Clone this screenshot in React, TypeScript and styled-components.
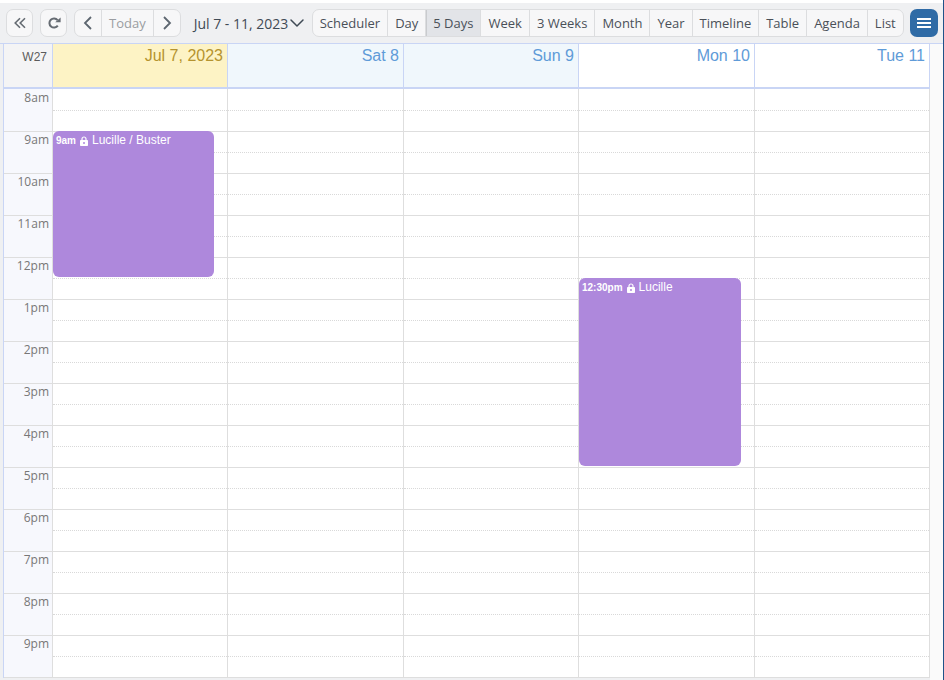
import React from 'react'
import styled, { createGlobalStyle } from 'styled-components'
import { ChevronDown } from 'lucide-react'

const hours = ['8am', '9am', '10am', '11am', '12pm', '1pm', '2pm', '3pm', '4pm', '5pm', '6pm', '7pm', '8pm', '9pm']
const views = ['Scheduler', 'Day', '5 Days', 'Week', '3 Weeks', 'Month', 'Year', 'Timeline', 'Table', 'Agenda', 'List']

type Tone = 'today' | 'weekend' | 'plain'

const days: { label: string; tone: Tone; width: number; event?: { time: string; title: string; top: number; height: number } }[] = [
  { label: 'Jul 7, 2023', tone: 'today', width: 175, event: { time: '9am', title: 'Lucille / Buster', top: 42, height: 146 } },
  { label: 'Sat 8', tone: 'weekend', width: 176 },
  { label: 'Sun 9', tone: 'weekend', width: 175 },
  { label: 'Mon 10', tone: 'plain', width: 176, event: { time: '12:30pm', title: 'Lucille', top: 189, height: 188 } },
  { label: 'Tue 11', tone: 'plain', width: 175 },
]

const DoubleLeft = () => (
  <svg width="14" height="14" viewBox="0 0 14 14" fill="none" stroke="currentColor" strokeWidth="1.6">
    <path d="M7 2.2 L2.2 7 L7 11.8" />
    <path d="M12 2.2 L7.2 7 L12 11.8" />
  </svg>
)

const Chevron = ({ flip }: { flip?: boolean }) => (
  <svg width="10" height="14" viewBox="0 0 10 14" fill="none" stroke="currentColor" strokeWidth="1.8">
    <path d={flip ? 'M2 1 L8 7 L2 13' : 'M8 1 L2 7 L8 13'} />
  </svg>
)

const Refresh = () => (
  <svg width="14" height="14" viewBox="0 0 14 14">
    <path d="M10.8 9.6 A4.6 4.6 0 1 1 10.6 4.1" fill="none" stroke="currentColor" strokeWidth="2" />
    <path d="M8.2 6.2 L13.6 6.2 L13.6 1.4 Z" fill="currentColor" />
  </svg>
)

const Hamburger = () => (
  <svg width="14" height="12" viewBox="0 0 14 12" fill="currentColor">
    <rect x="0" y="1" width="14" height="2" />
    <rect x="0" y="5" width="14" height="2" />
    <rect x="0" y="9" width="14" height="2" />
  </svg>
)

const Lock = () => (
  <svg width="8" height="10" viewBox="0 0 8 10">
    <path d="M2 4.5 V3 A2 2 0 0 1 6 3 V4.5" fill="none" stroke="#fff" strokeWidth="1.2" />
    <rect x="0" y="4" width="8" height="6" rx="0.8" fill="#fff" />
    <circle cx="4" cy="7" r="1" fill="#ae88dc" />
  </svg>
)

const App = () => {
  return (
    <Page>
      <GlobalStyle />
      <Toolbar>
        <IconButton><DoubleLeft /></IconButton>
        <IconButton $gap={7}><Refresh /></IconButton>
        <Group $gap={7}>
          <GroupIcon $wide><Chevron /></GroupIcon>
          <GroupButton $muted>Today</GroupButton>
          <GroupIcon><Chevron flip /></GroupIcon>
        </Group>
        <DateRange>
          Jul 7 - 11, 2023
          <ChevronDown size={24} strokeWidth={1.5} />
        </DateRange>
        <Group>
          {views.map((v) => (
            <GroupButton key={v} $active={v === '5 Days'}>{v}</GroupButton>
          ))}
        </Group>
        <MenuButton><Hamburger /></MenuButton>
      </Toolbar>
      <Calendar>
        <HeaderRow>
          <WeekCell>W27</WeekCell>
          {days.map((d) => (
            <DayHead key={d.label} $tone={d.tone} $width={d.width}>{d.label}</DayHead>
          ))}
        </HeaderRow>
        <Body>
          <TimeColumn>
            {hours.map((h) => (
              <TimeCell key={h}>{h}</TimeCell>
            ))}
          </TimeColumn>
          {days.map((d) => (
            <DayColumn key={d.label} $width={d.width}>
              {hours.map((h) => (
                <HourCell key={h}><HalfLine /></HourCell>
              ))}
              {d.event && (
                <EventCard $top={d.event.top} $height={d.event.height}>
                  <EventTime>{d.event.time}</EventTime>
                  <Lock />
                  <EventTitle>{d.event.title}</EventTitle>
                </EventCard>
              )}
            </DayColumn>
          ))}
        </Body>
      </Calendar>
    </Page>
  )
}

const GlobalStyle = createGlobalStyle`
  html, body {
    margin: 0;
    padding: 0;
    background: #fff;
  }
`

const Page = styled.div`
  width: 944px;
  height: 680px;
  box-sizing: border-box;
  padding-top: 3px;
  overflow: hidden;
  display: flex;
  flex-direction: column;
  border-right: 1px solid #1f5389;
  font-family: "Open Sans", sans-serif;
`

const Toolbar = styled.div`
  height: 40px;
  box-sizing: border-box;
  flex-shrink: 0;
  padding: 6px 0 0 6px;
  display: flex;
  align-items: flex-start;
  background: #eff0f2;
`

const IconButton = styled.button<{ $gap?: number }>`
  width: 27px;
  height: 28px;
  margin-left: ${(p) => p.$gap ?? 0}px;
  padding: 0;
  display: flex;
  align-items: center;
  justify-content: center;
  color: #666c73;
  background: #f7f7f8;
  border: 1px solid #dcdddf;
  border-radius: 7px;
`

const Group = styled.div<{ $gap?: number }>`
  height: 28px;
  margin-left: ${(p) => p.$gap ?? 0}px;
  box-sizing: border-box;
  display: flex;
  background: #f7f7f8;
  border: 1px solid #dcdddf;
  border-radius: 7px;
  overflow: hidden;
`

const GroupButton = styled.button<{ $active?: boolean; $muted?: boolean }>`
  height: 100%;
  padding: 0 7px;
  font-family: "Open Sans", sans-serif;
  font-size: 13px;
  color: ${(p) => (p.$muted ? '#9a9da1' : '#4a5058')};
  background: ${(p) => (p.$active ? '#e2e4e8' : 'transparent')};
  border: none;
  border-right: 1px solid #dcdddf;
  box-shadow: ${(p) => (p.$active ? 'inset 1px 0 0 #c9cbce' : 'none')};

  &:last-child {
    border-right: none;
  }
`

const GroupIcon = styled(GroupButton)<{ $wide?: boolean }>`
  width: ${(p) => (p.$wide ? 27 : 26)}px;
  padding: 0;
  display: flex;
  align-items: center;
  justify-content: center;
  color: #5d6670;
`

const DateRange = styled.div`
  width: 131px;
  height: 28px;
  box-sizing: border-box;
  padding-left: 13px;
  display: flex;
  align-items: center;
  font-size: 14px;
  color: #3f4a55;
  white-space: nowrap;

  svg {
    flex-shrink: 0;
    margin-left: -3px;
  }
`

const MenuButton = styled.button`
  width: 28px;
  height: 28px;
  margin-left: 6px;
  padding: 0;
  display: flex;
  align-items: center;
  justify-content: center;
  color: #fff;
  background: #2f6ba6;
  border: none;
  border-radius: 7px;
`

const Calendar = styled.div`
  flex: 1;
  display: flex;
  flex-direction: column;
  padding-left: 3px;
  background: linear-gradient(to right, #eff0f2 930px, #fafafa 930px);
`

const HeaderRow = styled.div`
  height: 46px;
  box-sizing: border-box;
  margin-left: -3px;
  padding-left: 3px;
  display: flex;
  border-top: 1px solid #c9d5f5;
`

const WeekCell = styled.div`
  width: 50px;
  box-sizing: border-box;
  padding: 6px 5px 0 0;
  text-align: right;
  font-family: "Liberation Sans", sans-serif;
  font-size: 12px;
  color: #5b5b5b;
  background: #f4f4f5;
  border-left: 1px solid #c9d5f5;
  border-right: 1px solid #c9d5f5;
  border-bottom: 2px solid #c9d5f5;
`

const DayHead = styled.div<{ $tone: Tone; $width: number }>`
  width: ${(p) => p.$width}px;
  box-sizing: border-box;
  padding: 3px 4px 0 0;
  text-align: right;
  font-family: "Liberation Sans", sans-serif;
  font-size: 16px;
  color: ${(p) => (p.$tone === 'today' ? '#b5932f' : '#5f9bd8')};
  background: ${(p) => (p.$tone === 'today' ? '#fdf3c5' : p.$tone === 'weekend' ? '#f0f7fc' : '#fff')};
  border-right: 1px solid #c9d5f5;
  border-bottom: 2px solid #c9d5f5;
`

const Body = styled.div`
  display: flex;
`

const TimeColumn = styled.div`
  width: 50px;
  box-sizing: border-box;
  background: #f7f8fd;
  border-left: 1px solid #c9d5f5;
  border-right: 1px solid #dedede;
`

const TimeCell = styled.div`
  height: 42px;
  box-sizing: border-box;
  padding: 0 3px 0 0;
  text-align: right;
  font-size: 12px;
  line-height: 15px;
  color: #777;
  border-bottom: 1px solid #dedede;

  &:first-child {
    height: 43px;
    padding-top: 1px;
  }
`

const DayColumn = styled.div<{ $width: number }>`
  position: relative;
  width: ${(p) => p.$width}px;
  box-sizing: border-box;
  background: #fff;
  border-right: 1px solid #dedede;
`

const HourCell = styled.div`
  height: 42px;
  box-sizing: border-box;
  border-bottom: 1px solid #dedede;

  &:first-child {
    height: 43px;
    padding-top: 1px;
  }
`

const HalfLine = styled.div`
  height: 21px;
  box-sizing: border-box;
  border-bottom: 1px dotted #d9d9d9;
`

const EventCard = styled.div<{ $top: number; $height: number }>`
  position: absolute;
  top: ${(p) => p.$top}px;
  left: 0;
  right: 13px;
  height: ${(p) => p.$height}px;
  box-sizing: border-box;
  padding: 1px 3px;
  display: flex;
  align-items: flex-start;
  color: #fff;
  background: #ae88dc;
  border-radius: 6px;
  font-family: "Liberation Sans", sans-serif;

  svg {
    flex-shrink: 0;
    margin: 4px 4px 0 4px;
  }
`

const EventTime = styled.span`
  font-size: 10px;
  font-weight: bold;
  line-height: 18px;
`

const EventTitle = styled.span`
  font-size: 12px;
  line-height: 15px;
  margin-top: 1px;
`

export default App
